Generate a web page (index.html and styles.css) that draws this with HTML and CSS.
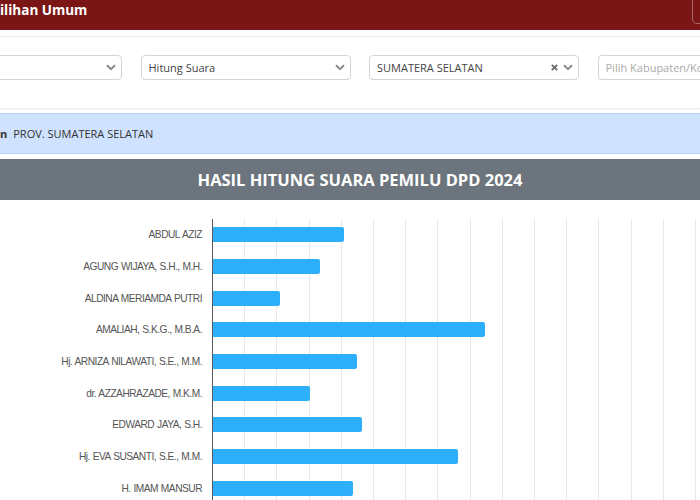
FILE: index.html
```html
<!DOCTYPE html>
<html lang="id">
<head>
<meta charset="utf-8">
<title>Hasil Hitung Suara Pemilu DPD 2024</title>
<link rel="stylesheet" href="styles.css">
</head>
<body>
<header class="topbar">
  <span class="brand">ilihan Umum</span>
  <span class="corner"></span>
</header>

<section class="filters">
  <div class="filter-row">
    <div class="select">
      <span class="value"></span>
      <svg class="chev" width="10" height="7" viewBox="0 0 10 7"><path d="M1 1.2 L5 5.2 L9 1.2" fill="none" stroke="#8a8a8a" stroke-width="2"/></svg>
    </div>
    <div class="select">
      <span class="value">Hitung Suara</span>
      <svg class="chev" width="10" height="7" viewBox="0 0 10 7"><path d="M1 1.2 L5 5.2 L9 1.2" fill="none" stroke="#8a8a8a" stroke-width="2"/></svg>
    </div>
    <div class="select">
      <span class="value">SUMATERA SELATAN</span>
      <svg class="clear" width="7" height="7" viewBox="0 0 7 7"><path d="M0.8 0.8 L6.2 6.2 M6.2 0.8 L0.8 6.2" fill="none" stroke="#6a6a6a" stroke-width="1.8"/></svg>
      <svg class="chev" width="10" height="7" viewBox="0 0 10 7"><path d="M1 1.2 L5 5.2 L9 1.2" fill="none" stroke="#8a8a8a" stroke-width="2"/></svg>
    </div>
    <div class="select select-last">
      <span class="value placeholder">Pilih Kabupaten/Ko</span>
    </div>
  </div>
</section>

<div class="alert"><b class="alert-label">n</b><span>PROV. SUMATERA SELATAN</span></div>

<div class="title">HASIL HITUNG SUARA PEMILU DPD 2024</div>

<div class="chart">
  <div class="labels">
    <div class="label">ABDUL AZIZ</div>
    <div class="label">AGUNG WIJAYA, S.H., M.H.</div>
    <div class="label">ALDINA MERIAMDA PUTRI</div>
    <div class="label">AMALIAH, S.K.G., M.B.A.</div>
    <div class="label">Hj. ARNIZA NILAWATI, S.E., M.M.</div>
    <div class="label">dr. AZZAHRAZADE, M.K.M.</div>
    <div class="label">EDWARD JAYA, S.H.</div>
    <div class="label">Hj. EVA SUSANTI, S.E., M.M.</div>
    <div class="label">H. IMAM MANSUR</div>
  </div>
  <div class="plot">
    <div class="row"><div class="bar" style="width:131px"></div></div>
    <div class="row"><div class="bar" style="width:107px"></div></div>
    <div class="row"><div class="bar" style="width:67px"></div></div>
    <div class="row"><div class="bar" style="width:272px"></div></div>
    <div class="row"><div class="bar" style="width:144px"></div></div>
    <div class="row"><div class="bar" style="width:97px"></div></div>
    <div class="row"><div class="bar" style="width:149px"></div></div>
    <div class="row"><div class="bar" style="width:245px"></div></div>
    <div class="row"><div class="bar" style="width:140px"></div></div>
  </div>
</div>
</body>
</html>
```

FILE: styles.css
```css
* { box-sizing: border-box; }

html, body {
  margin: 0;
  padding: 0;
  background: #ffffff;
  overflow: hidden;
  font-family: "Open Sans", "Noto Sans", sans-serif;
}

.topbar {
  height: 30px;
  background: #7a1616;
  display: flex;
  justify-content: space-between;
  align-items: flex-start;
}

.brand {
  color: #ffffff;
  font-weight: 700;
  font-size: 13.5px;
  line-height: 18px;
  padding-top: 1px;
}

.corner {
  width: 8px;
  height: 24px;
  border-left: 1px solid rgba(255, 255, 255, 0.35);
  border-bottom: 1px solid rgba(255, 255, 255, 0.35);
  border-bottom-left-radius: 5px;
}

.filters {
  margin-top: 7px;
  padding: 18px 0 28px;
  background: #ffffff;
  box-shadow: 0 0 0 1px #ececec, 0 1px 2px rgba(0, 0, 0, 0.12);
}

.filter-row {
  display: flex;
  gap: 18.5px;
  margin-left: -88px;
}

.select {
  flex: 0 0 210px;
  height: 25px;
  border: 1px solid #d4d4d4;
  border-radius: 4px;
  display: flex;
  align-items: center;
  padding: 0 5px 0 7px;
  font-size: 11px;
  color: #444444;
  background: #ffffff;
}

.select-last {
  flex-basis: 103px;
  border-right: 0;
  border-radius: 4px 0 0 4px;
}

.value {
  flex: 1;
  white-space: nowrap;
  overflow: hidden;
}

.placeholder { color: #aaaaaa; }

.clear { margin-right: 5px; }

.alert {
  margin-top: 5px;
  height: 41px;
  background: #cfe2ff;
  border-top: 1px solid #b6d4fe;
  border-bottom: 1px solid #b6d4fe;
  display: flex;
  align-items: center;
  font-size: 11px;
  color: #333333;
}

.alert-label {
  font-weight: 700;
  margin-right: 6px;
}

.title {
  margin-top: 5px;
  height: 41px;
  background: #6c757d;
  color: #ffffff;
  font-weight: 700;
  font-size: 16.5px;
  display: flex;
  align-items: center;
  justify-content: center;
  padding-left: 20px;
}

.chart {
  display: grid;
  grid-template-columns: 212px 1fr;
  padding-top: 19px;
}

.label {
  height: 31.7px;
  display: flex;
  align-items: center;
  justify-content: flex-end;
  padding-right: 10px;
  font-family: "Liberation Sans", Arial, sans-serif;
  font-size: 10.2px;
  letter-spacing: -0.5px;
  word-spacing: 0.5px;
  color: #555555;
  white-space: nowrap;
}

.plot {
  border-left: 1px solid #5a5a5a;
  background-image: repeating-linear-gradient(to right, transparent 0, transparent 31.2px, #e8e8e8 31.2px, #e8e8e8 32.2px);
}

.row {
  height: 31.7px;
  display: flex;
  align-items: center;
}

.bar {
  height: 15px;
  background: #2eaffc;
  border-radius: 0 2px 2px 0;
}
```
